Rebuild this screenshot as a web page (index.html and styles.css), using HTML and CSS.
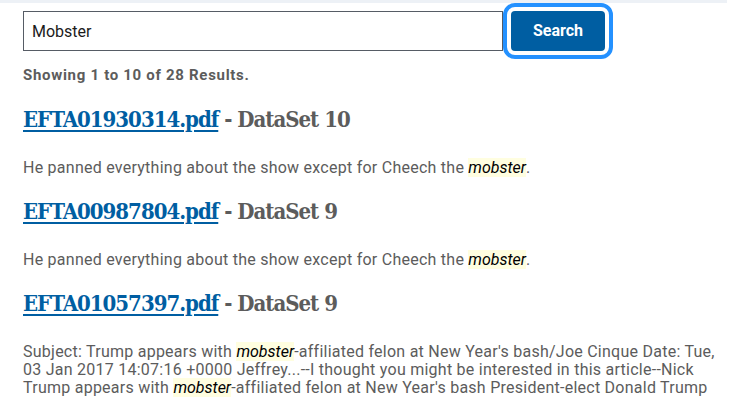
FILE: index.html
```html
<!DOCTYPE html>
<html lang="en">
<head>
<meta charset="utf-8">
<title>Search results</title>
<link rel="stylesheet" href="styles.css">
</head>
<body>
<div class="topbar"></div>
<main class="content">
  <form class="search-form" onsubmit="return false">
    <input class="search-input" type="text" value="Mobster" aria-label="Search">
    <button class="search-button" type="submit">Search</button>
  </form>
  <p class="summary">Showing 1 to 10 of 28 Results.</p>
  <ul class="results">
    <li class="result">
      <h2 class="result-title"><a href="#">EFTA01930314.pdf</a> - DataSet 10</h2>
      <p class="snippet">He panned everything about the show except for Cheech the <em class="hl">mobster</em>.</p>
    </li>
    <li class="result">
      <h2 class="result-title"><a href="#">EFTA00987804.pdf</a> - DataSet 9</h2>
      <p class="snippet">He panned everything about the show except for Cheech the <em class="hl">mobster</em>.</p>
    </li>
    <li class="result">
      <h2 class="result-title"><a href="#">EFTA01057397.pdf</a> - DataSet 9</h2>
      <p class="snippet">Subject: Trump appears with <em class="hl">mobster</em>-affiliated felon at New Year's bash/Joe Cinque Date: Tue, 03 Jan 2017 14:07:16 +0000 Jeffrey...--I thought you might be interested in this article--Nick Trump appears with <em class="hl">mobster</em>-affiliated felon at New Year's bash President-elect Donald Trump</p>
    </li>
  </ul>
</main>
</body>
</html>
```

FILE: styles.css
```css
html, body {
  margin: 0;
  padding: 0;
  background: #ffffff;
}

body {
  font-family: Roboto, "Liberation Sans", sans-serif;
  color: #565c65;
  width: 744px;
  height: 402px;
  overflow: hidden;
}

.topbar {
  width: 727px;
  height: 3px;
  background: #edf1f6;
}

.content {
  width: 704px;
  padding: 0 0 0 23px;
}

.search-form {
  display: flex;
  align-items: center;
  margin: 8px 0 0;
}

.search-input {
  box-sizing: border-box;
  width: 480px;
  height: 40px;
  margin: 0;
  padding: 0 8px;
  border: 1px solid #565c65;
  border-radius: 0;
  font-family: Roboto, "Liberation Sans", sans-serif;
  font-size: 16px;
  color: #1b1b1b;
  background: #fff;
}

.search-button {
  box-sizing: border-box;
  width: 94px;
  height: 40px;
  margin: 0 0 0 8px;
  padding: 0 0 2px;
  border: 0;
  border-radius: 4px;
  background: #005ea2;
  color: #fff;
  font-family: Roboto, "Liberation Sans", sans-serif;
  font-weight: 700;
  font-size: 16px;
  outline: 4px solid #2491ff;
  outline-offset: 4px;
}

.summary {
  margin: 14px 0 0;
  font-size: 15px;
  line-height: 20px;
  font-weight: 700;
  letter-spacing: 0.7px;
  color: #5c5c5c;
}

.results {
  list-style: none;
  margin: 0;
  padding: 0;
}

.result {
  margin: 0;
}

.result-title {
  margin: 20px 0 0;
  font-family: "DejaVu Serif", "Liberation Serif", serif;
  font-stretch: condensed;
  font-size: 22px;
  line-height: 28px;
  font-weight: 700;
  letter-spacing: -1px;
  color: #5c5c5c;
}

.result + .result .result-title {
  margin-top: 20px;
}

.result-title a {
  color: #005ea2;
  text-decoration: underline;
  text-decoration-thickness: 2px;
  text-underline-offset: 3px;
}

.snippet {
  margin: 26px 0 0;
  font-size: 16px;
  line-height: 18px;
  letter-spacing: 0.25px;
  color: #5c5c5c;
}

.hl {
  font-style: italic;
  color: #000;
  background: #fffee0;
  letter-spacing: 0;
}
```
